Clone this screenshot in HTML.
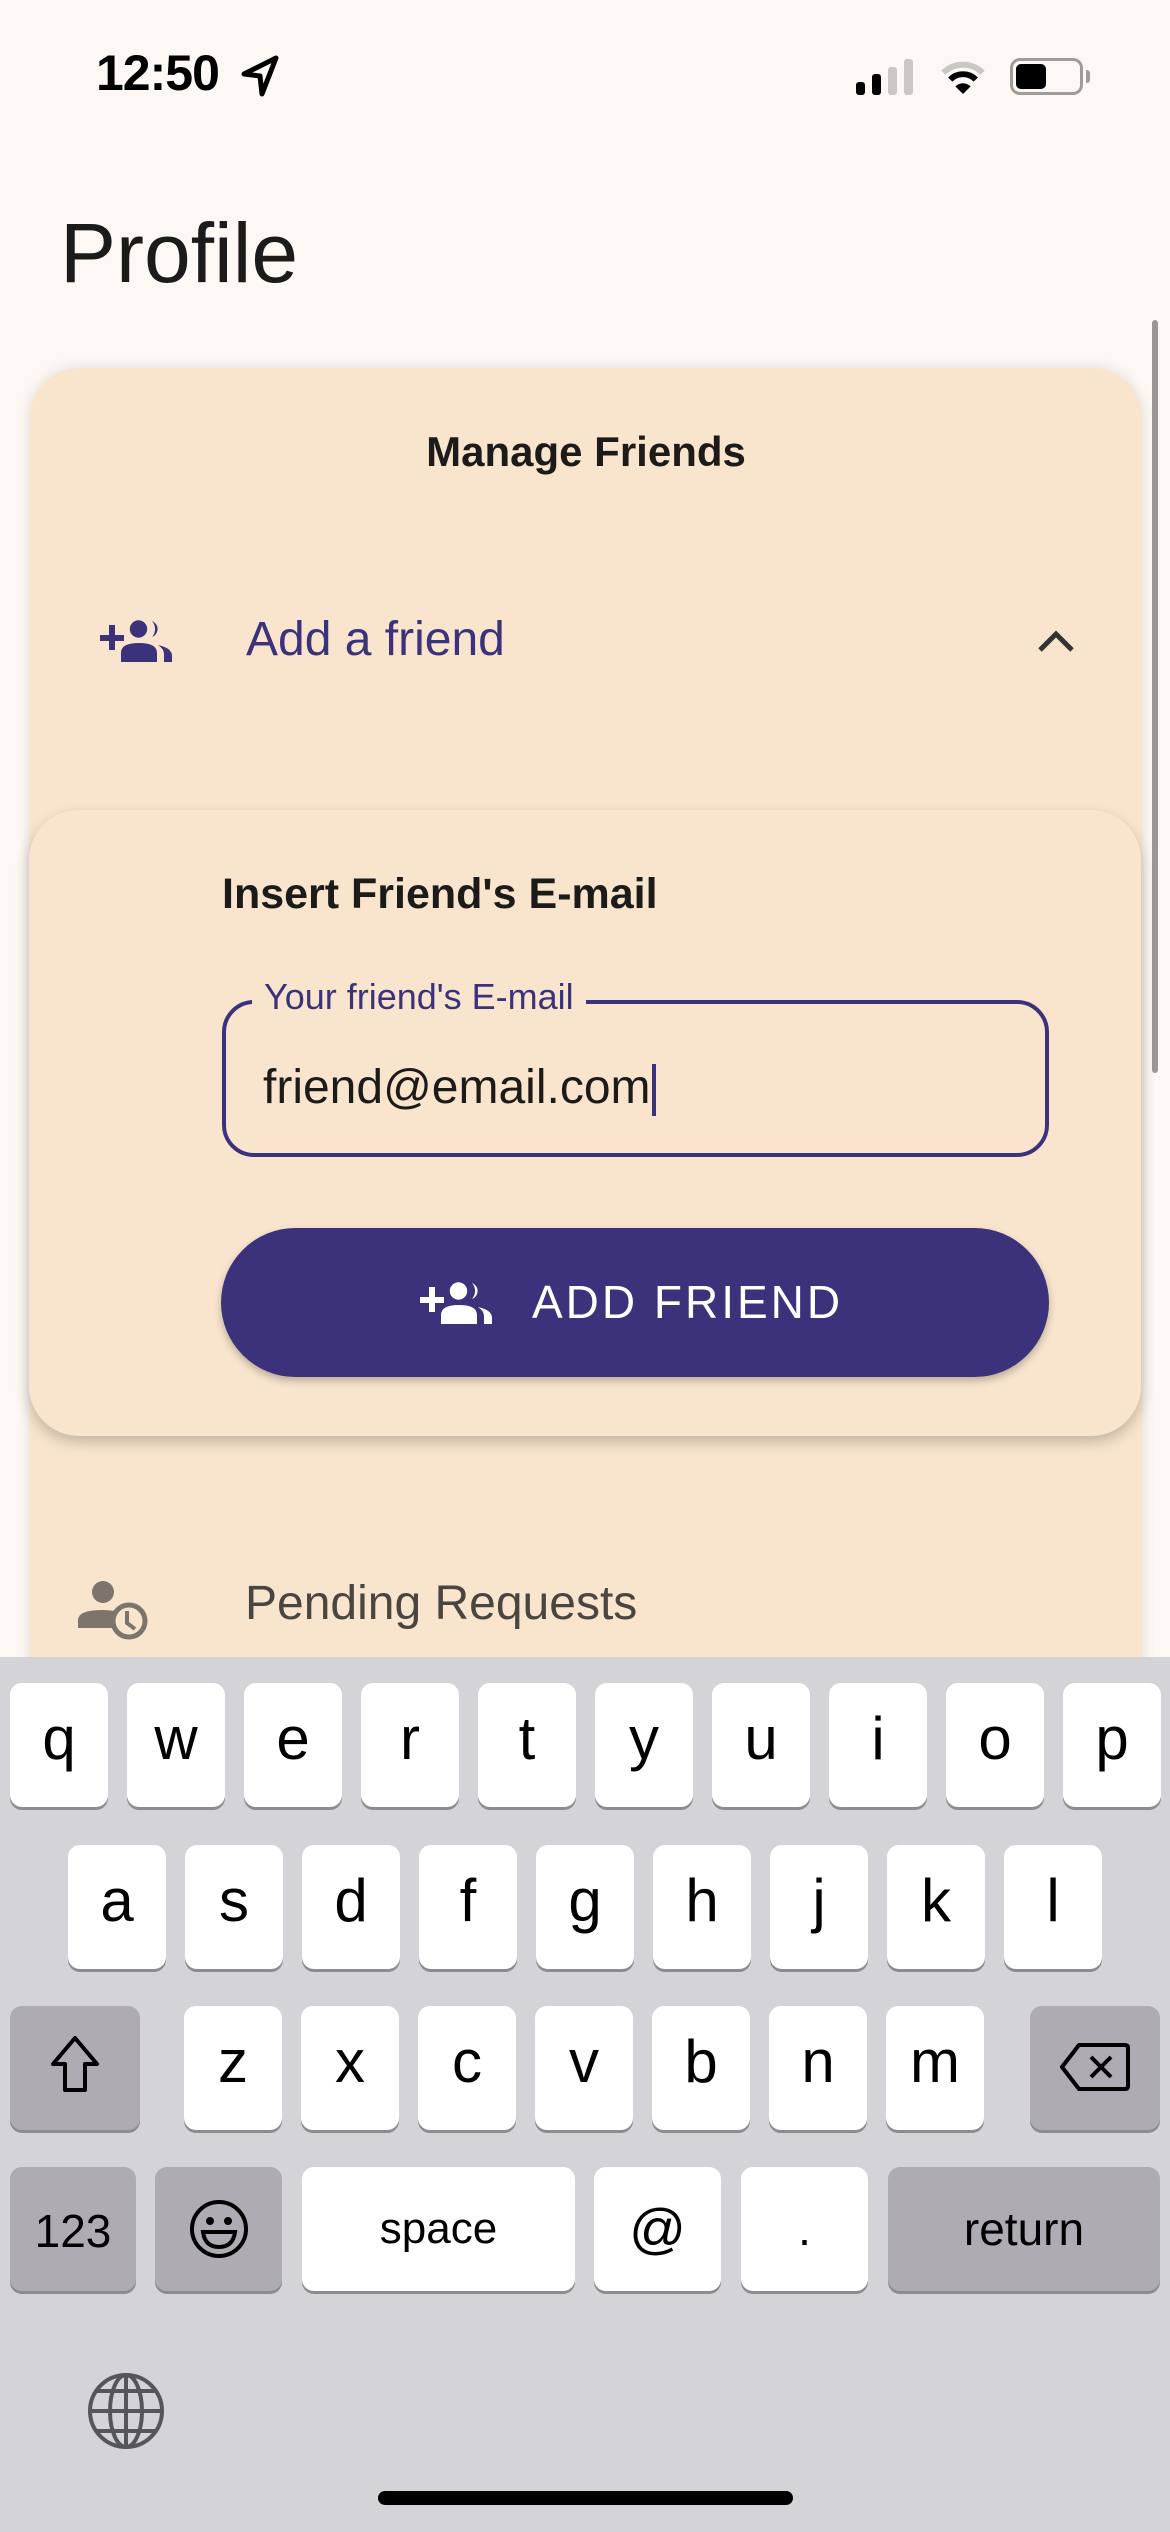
<!DOCTYPE html>
<html><head><meta charset="utf-8">
<style>
*{margin:0;padding:0;box-sizing:border-box}
body{width:1170px;height:2532px;position:relative;overflow:hidden;background:#fdf8f4;font-family:"Liberation Sans",sans-serif}
.a{position:absolute}
.key{position:absolute;background:#fff;border-radius:12px;box-shadow:0 3px 0 #8c8b90;text-align:center;color:#000;font-size:60px;line-height:112px;height:124px;width:98px}
.dk{background:#aeabb2}
</style></head><body>
<!-- status bar -->
<div class="a" style="left:96px;top:44px;font-size:50px;font-weight:bold;letter-spacing:-1px;color:#000">12:50</div>
<svg class="a" style="left:240px;top:54px" width="40" height="44" viewBox="0 0 40 44"><path d="M36 4 L4 20 L20 22 L22 40 Z" fill="none" stroke="#000" stroke-width="5" stroke-linejoin="round"/></svg>
<div class="a" style="left:856px;top:82px;width:9px;height:13px;background:#000;border-radius:3px"></div>
<div class="a" style="left:872px;top:74px;width:9px;height:21px;background:#000;border-radius:3px"></div>
<div class="a" style="left:888px;top:67px;width:9px;height:28px;background:#cbc8c3;border-radius:3px"></div>
<div class="a" style="left:904px;top:59px;width:9px;height:36px;background:#cbc8c3;border-radius:3px"></div>
<svg class="a" style="left:940px;top:58px" width="46" height="38" viewBox="0 0 54 42"><path d="M4 16 A33 33 0 0 1 50 16" fill="none" stroke="#cbc8c3" stroke-width="7"/><path d="M12 24 A21 21 0 0 1 42 24" fill="none" stroke="#000" stroke-width="7"/><path d="M18 32 L27 41 L36 32 A13 13 0 0 0 18 32Z" fill="#000"/></svg>
<div class="a" style="left:1010px;top:58px;width:73px;height:37px;border:3px solid #a09c98;border-radius:10px"></div>
<div class="a" style="left:1016px;top:64px;width:30px;height:25px;background:#000;border-radius:5px"></div>
<div class="a" style="left:1086px;top:70px;width:4px;height:13px;background:#a09c98;border-radius:0 3px 3px 0"></div>

<div class="a" style="left:60px;top:205px;font-size:84px;color:#1b1b1b">Profile</div>

<!-- outer card -->
<div class="a" style="left:30px;top:368px;width:1112px;height:1500px;background:#f9e5cd;border-radius:50px;box-shadow:0 0 14px rgba(0,0,0,0.12)"></div>
<div class="a" style="left:1152px;top:320px;width:6px;height:753px;background:#9b9794;border-radius:3px"></div>
<div class="a" style="left:30px;top:428px;width:1112px;text-align:center;font-size:42px;font-weight:bold;color:#1d1b1a">Manage Friends</div>
<svg class="a" style="left:100px;top:620px" width="72" height="42" viewBox="0 0 72 42" fill="#3c327c"><rect x="0" y="15" width="24" height="6"/><rect x="9" y="5" width="6" height="25"/><circle cx="38.5" cy="9" r="8.7"/><path d="M21 42 V33 Q21 23 39 23 Q57 23 57 33 V42Z"/><path d="M52 1 A8.5 8.5 0 0 1 52 17 A12 12 0 0 0 52 1Z"/><path d="M58 25 Q72 28 72 36 V42 H64 V34 Q64 29 58 25Z"/></svg>
<div class="a" style="left:246px;top:612px;font-size:48px;color:#3c327c">Add a friend</div>
<svg class="a" style="left:1036px;top:628px" width="40" height="26" viewBox="0 0 40 26"><path d="M4 22 L20 6 L36 22" fill="none" stroke="#333" stroke-width="5"/></svg>

<!-- inner card -->
<div class="a" style="left:29px;top:810px;width:1112px;height:626px;background:#f9e5cd;border-radius:50px;box-shadow:0 6px 14px rgba(0,0,0,0.22)"></div>
<div class="a" style="left:222px;top:870px;font-size:43px;font-weight:bold;color:#1d1b1a">Insert Friend's E-mail</div>
<div class="a" style="left:222px;top:1000px;width:827px;height:157px;border:4px solid #3c327c;border-radius:32px"></div>
<div class="a" style="left:252px;top:976px;padding:0 12px;background:#f9e5cd;font-size:36px;color:#3c327c">Your friend's E-mail</div>
<div class="a" style="left:263px;top:1060px;font-size:48px;color:#1d1b1a">friend@email.com</div>
<div class="a" style="left:652px;top:1064px;width:4px;height:52px;background:#3c327c"></div>
<div class="a" style="left:221px;top:1228px;width:828px;height:149px;background:#3c327c;border-radius:75px;box-shadow:0 4px 8px rgba(0,0,0,0.25)"></div>
<svg class="a" style="left:420px;top:1282px" width="72" height="42" viewBox="0 0 72 42" fill="#fff"><rect x="0" y="15" width="24" height="6"/><rect x="9" y="5" width="6" height="25"/><circle cx="38.5" cy="9" r="8.7"/><path d="M21 42 V33 Q21 23 39 23 Q57 23 57 33 V42Z"/><path d="M52 1 A8.5 8.5 0 0 1 52 17 A12 12 0 0 0 52 1Z"/><path d="M58 25 Q72 28 72 36 V42 H64 V34 Q64 29 58 25Z"/></svg>
<div class="a" style="left:532px;top:1275px;font-size:46px;letter-spacing:3px;color:#fff">ADD FRIEND</div>

<svg class="a" style="left:76px;top:1578px" width="74" height="66" viewBox="0 0 74 66" fill="#7d746b"><circle cx="27" cy="14" r="11"/><path d="M2 50 V42 Q2 32 27 32 Q38 32 44 35 L40 50Z"/><circle cx="53" cy="43" r="16" fill="#f9e5cd" stroke="#7d746b" stroke-width="5"/><path d="M51 33 V45 L59 51" fill="none" stroke="#7d746b" stroke-width="4"/></svg>
<div class="a" style="left:245px;top:1576px;font-size:48px;color:#4a4540">Pending Requests</div>

<!-- keyboard -->
<div class="a" style="left:0;top:1657px;width:1170px;height:875px;background:#d3d3d8"></div>
<div class="key" style="left:10px;top:1683px">q</div>
<div class="key" style="left:127px;top:1683px">w</div>
<div class="key" style="left:244px;top:1683px">e</div>
<div class="key" style="left:361px;top:1683px">r</div>
<div class="key" style="left:478px;top:1683px">t</div>
<div class="key" style="left:595px;top:1683px">y</div>
<div class="key" style="left:712px;top:1683px">u</div>
<div class="key" style="left:829px;top:1683px">i</div>
<div class="key" style="left:946px;top:1683px">o</div>
<div class="key" style="left:1063px;top:1683px">p</div>
<div class="key" style="left:68px;top:1845px">a</div>
<div class="key" style="left:185px;top:1845px">s</div>
<div class="key" style="left:302px;top:1845px">d</div>
<div class="key" style="left:419px;top:1845px">f</div>
<div class="key" style="left:536px;top:1845px">g</div>
<div class="key" style="left:653px;top:1845px">h</div>
<div class="key" style="left:770px;top:1845px">j</div>
<div class="key" style="left:887px;top:1845px">k</div>
<div class="key" style="left:1004px;top:1845px">l</div>
<div class="key dk" style="left:10px;top:2006px;width:130px"><svg width="60" height="70" viewBox="0 0 60 70" style="margin-top:26px"><path d="M30 6 L52 32 H40 V58 H20 V32 H8 Z" fill="none" stroke="#000" stroke-width="4" stroke-linejoin="round"/></svg></div>
<div class="key" style="left:184px;top:2006px">z</div>
<div class="key" style="left:301px;top:2006px">x</div>
<div class="key" style="left:418px;top:2006px">c</div>
<div class="key" style="left:535px;top:2006px">v</div>
<div class="key" style="left:652px;top:2006px">b</div>
<div class="key" style="left:769px;top:2006px">n</div>
<div class="key" style="left:886px;top:2006px">m</div>
<div class="key dk" style="left:1030px;top:2006px;width:130px"><svg width="72" height="50" viewBox="0 0 72 50" style="margin-top:36px"><path d="M20 3 H66 Q69 3 69 6 V44 Q69 47 66 47 H20 L3 25 Z" fill="none" stroke="#000" stroke-width="4" stroke-linejoin="round"/><path d="M32 15 L52 35 M52 15 L32 35" stroke="#000" stroke-width="4"/></svg></div>
<div class="key dk" style="left:10px;top:2167px;width:126px;font-size:46px;line-height:128px">123</div>
<div class="key dk" style="left:155px;top:2167px;width:127px"><svg width="60" height="60" viewBox="0 0 60 60" style="margin-top:32px"><circle cx="30" cy="30" r="27" fill="none" stroke="#000" stroke-width="4"/><circle cx="21" cy="22" r="4"/><circle cx="39" cy="22" r="4"/><path d="M14 33 H46 Q44 48 30 48 Q16 48 14 33Z" fill="none" stroke="#000" stroke-width="4"/></svg></div>
<div class="key" style="left:302px;top:2167px;width:273px;font-size:44px;line-height:124px">space</div>
<div class="key" style="left:594px;top:2167px;width:127px;font-size:56px;line-height:124px">@</div>
<div class="key" style="left:741px;top:2167px;width:127px;font-size:46px;line-height:124px">.</div>
<div class="key dk" style="left:888px;top:2167px;width:272px;font-size:46px;line-height:124px">return</div>
<svg class="a" style="left:86px;top:2371px" width="80" height="80" viewBox="0 0 80 80" fill="none" stroke="#55565b" stroke-width="4"><circle cx="40" cy="40" r="36"/><ellipse cx="40" cy="40" rx="16" ry="36"/><line x1="40" y1="4" x2="40" y2="76"/><line x1="4" y1="40" x2="76" y2="40"/><path d="M10 20 H70 M10 60 H70"/></svg>
<div class="a" style="left:378px;top:2491px;width:415px;height:14px;background:#000;border-radius:7px"></div>
</body></html>
